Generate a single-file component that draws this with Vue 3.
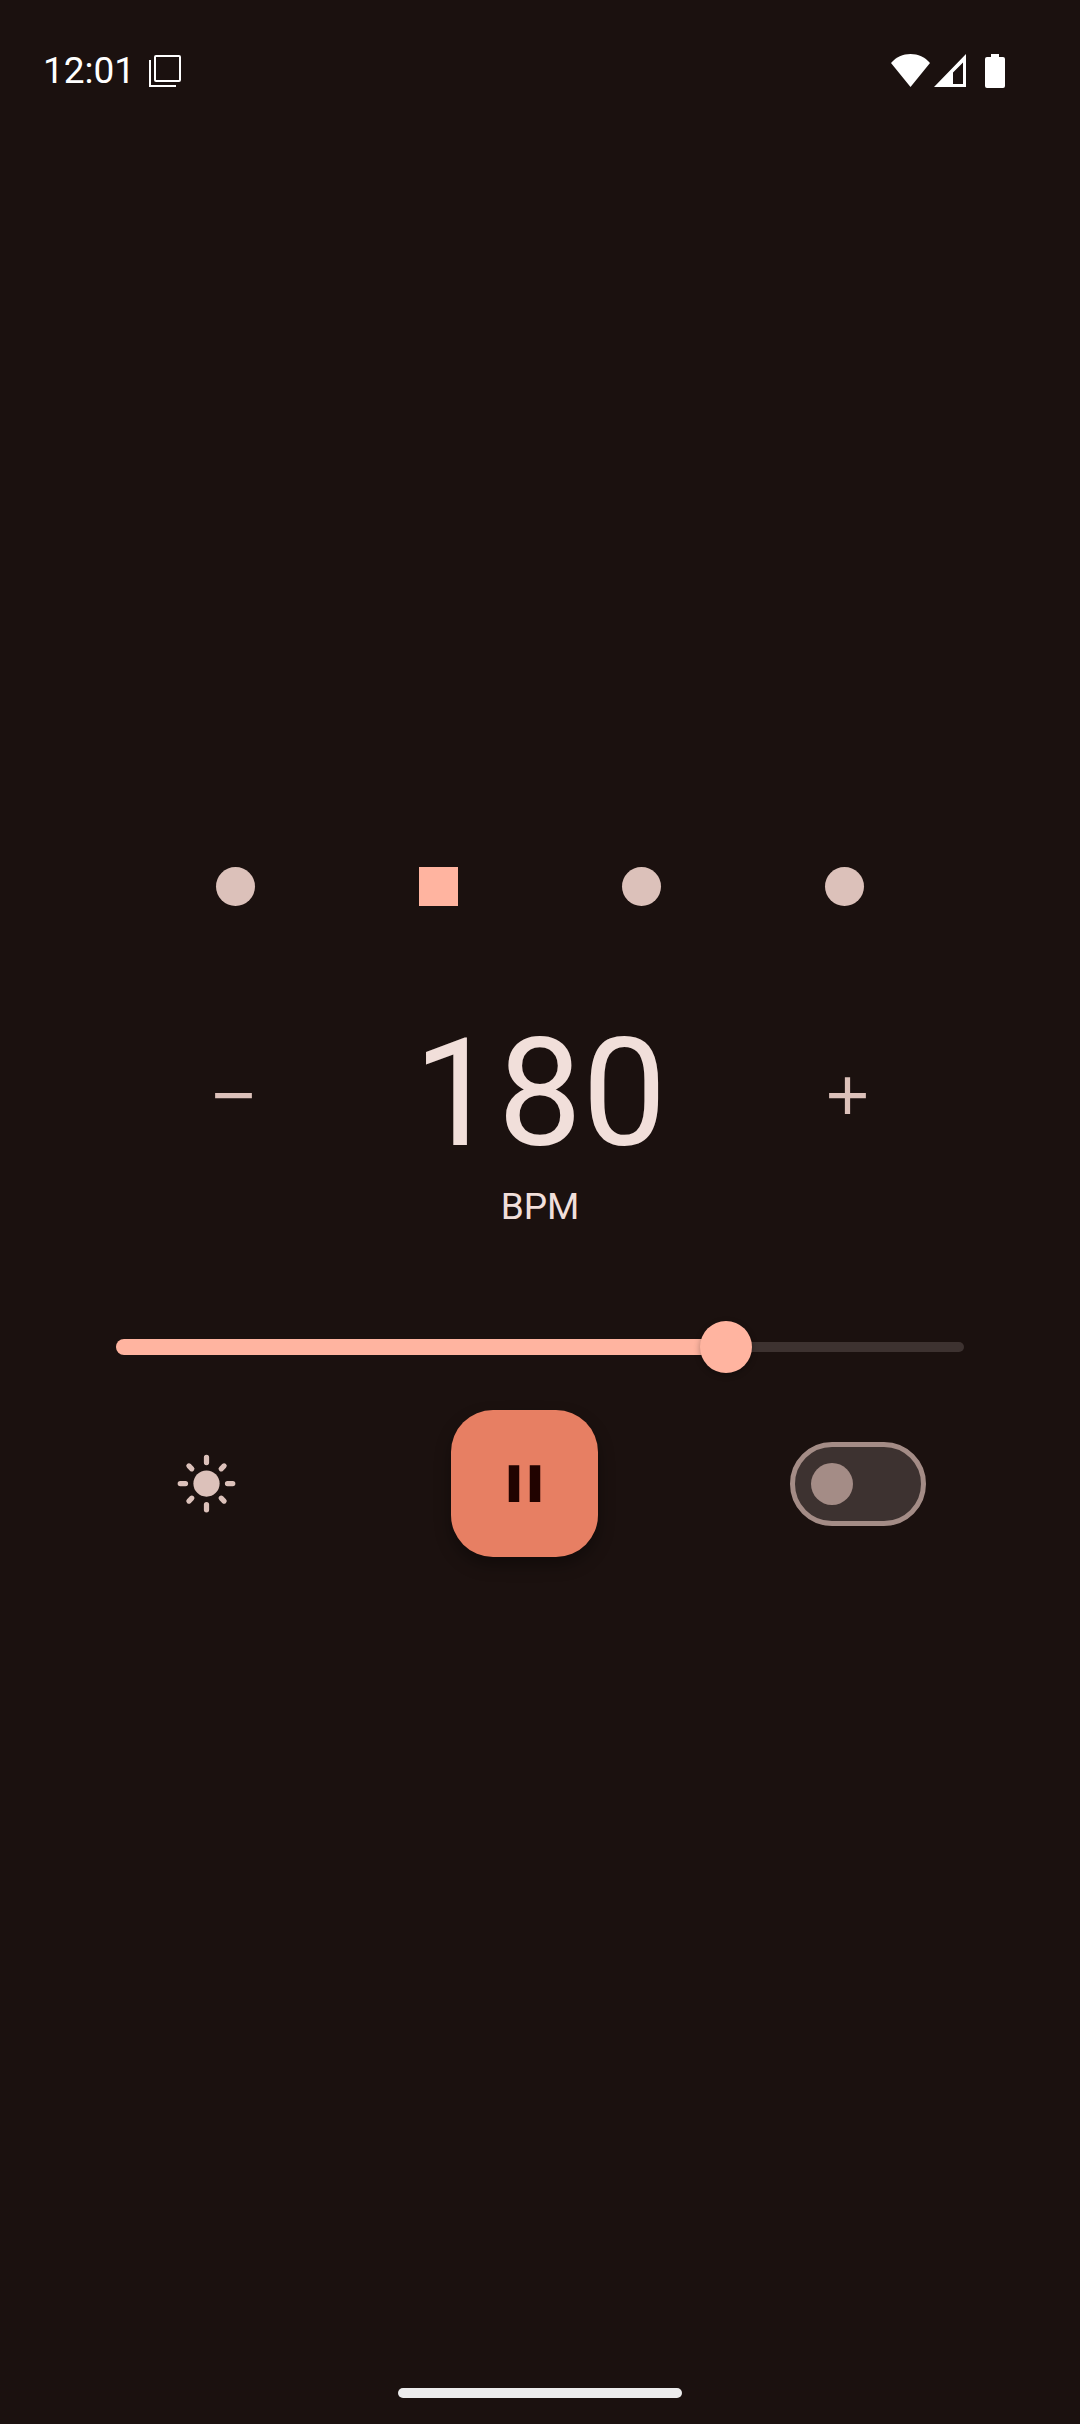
<script setup>
import { computed, ref } from 'vue'

const MIN = 20
const MAX = 238

const bpm = ref(180)
const beats = 4
const currentBeat = ref(1)
const silent = ref(false)

const fraction = computed(() => (bpm.value - MIN) / (MAX - MIN))
const fillStyle = computed(() => ({
  width: `calc(26px + (100% - 52px) * ${fraction.value})`
}))

function step(amount) {
  bpm.value = Math.min(MAX, Math.max(MIN, bpm.value + amount))
}
</script>

<template>
  <div class="screen">
    <header class="status-bar">
      <span class="clock">12:01</span>
      <svg class="notification" viewBox="0 0 32 32" aria-hidden="true">
        <rect x="6" y="1" width="25" height="25" rx="1" />
        <path d="M1 5v26h26" />
      </svg>
      <div class="system-icons">
        <svg width="39" height="33" viewBox="0 0 39 33" aria-hidden="true">
          <path d="M19.500 33 0 9C5 3 12 0 19.500 0S34 3 39 9z" />
        </svg>
        <svg width="32" height="33" viewBox="0 0 32 33" aria-hidden="true">
          <path fill-rule="evenodd" d="M32 0v33H0zM29 8.500 19 18.500V30h10z" />
        </svg>
        <svg class="battery" width="20" height="34" viewBox="0 0 20 34" aria-hidden="true">
          <path d="M6 0h8v3h4q2 0 2 2v27q0 2-2 2H2q-2 0-2-2V5q0-2 2-2h4z" />
        </svg>
      </div>
    </header>

    <main class="metronome">
      <div class="beats">
        <span
          v-for="(n, i) in beats"
          :key="n"
          class="beat"
          :class="{ active: i === currentBeat }"
        ></span>
      </div>

      <section class="tempo">
        <div class="tempo-row">
          <button type="button" class="icon-button" aria-label="Decrease tempo" @click="step(-1)">
            <svg viewBox="0 0 24 24"><path d="M19 13H5v-2h14z" /></svg>
          </button>
          <span class="value">{{ bpm }}</span>
          <button type="button" class="icon-button" aria-label="Increase tempo" @click="step(1)">
            <svg viewBox="0 0 24 24"><path d="M19 13h-6v6h-2v-6H5v-2h6V5h2v6h6z" /></svg>
          </button>
        </div>
        <span class="unit">BPM</span>
      </section>

      <div class="slider">
        <div class="track"></div>
        <div class="fill" :style="fillStyle"></div>
        <input v-model.number="bpm" type="range" :min="MIN" :max="MAX" aria-label="Tempo" />
      </div>

      <div class="controls">
        <button type="button" class="icon-button small" aria-label="Keep screen bright">
          <svg viewBox="0 0 24 24">
            <circle cx="12" cy="12" r="5" />
            <path
              class="rays"
              d="M12 2v2M12 20v2M2 12h2M20 12h2M5.300 5.300l1.100 1.100M17.600 17.600l1.100 1.100M18.700 5.300l-1.100 1.100M6.400 17.600l-1.100 1.100"
            />
          </svg>
        </button>
        <button type="button" class="play" aria-label="Pause">
          <svg viewBox="0 0 24 24"><path d="M6 19h4V5H6zM14 5v14h4V5z" /></svg>
        </button>
        <input v-model="silent" class="switch" type="checkbox" role="switch" aria-label="Silent mode" />
      </div>
    </main>

    <footer class="nav"><div class="handle"></div></footer>
  </div>
</template>

<style>
body {
  background: #1b110f;
}
</style>

<style scoped>
.screen {
  display: grid;
  grid-template-rows: 1fr auto 1fr;
  min-height: 100vh;
  background: #1b110f;
  color: #f1dfda;
  font-family: Roboto, "Noto Sans", sans-serif;
}

.status-bar {
  display: flex;
  align-self: start;
  align-items: center;
  height: 34px;
  padding: 54px 75px 0 43px;
  color: #fff;
}

.clock {
  min-width: 92px;
  font-size: 37px;
  line-height: 34px;
}

.notification {
  width: 32px;
  height: 32px;
  margin-left: 14px;
  fill: none;
  stroke: #fff;
  stroke-width: 2;
}

.system-icons {
  display: flex;
  gap: 4px;
  margin-left: auto;
  fill: #fff;
}

.battery {
  margin-left: 15px;
}

.beats {
  display: flex;
  justify-content: space-around;
  padding: 0 134px;
}

.beat {
  width: 39px;
  height: 39px;
  border-radius: 50%;
  background: #dcc1ba;
}

.beat.active {
  border-radius: 0;
  background: #ffb4a0;
}

.tempo {
  display: flex;
  flex-direction: column;
  margin-top: 103px;
}

.tempo-row {
  display: flex;
  justify-content: space-between;
  height: 172px;
  padding: 0 170px;
}

.value {
  font-size: 150px;
  line-height: 170px;
}

.unit {
  font-size: 37px;
  line-height: 52px;
  text-align: center;
}

button {
  display: flex;
  align-items: center;
  justify-content: center;
  padding: 0;
  border: 0;
  background: none;
  cursor: pointer;
}

button svg {
  width: 63px;
  height: 63px;
}

.icon-button {
  align-self: center;
  width: 126px;
  height: 126px;
  border-radius: 50%;
  fill: #dcc1ba;
}

.icon-button.small {
  width: 105px;
  height: 105px;
}

.rays {
  stroke: #dcc1ba;
  stroke-width: 2;
  stroke-linecap: round;
}

.slider {
  display: grid;
  align-items: center;
  height: 52px;
  margin: 88px 116px 0;
}

.slider > * {
  grid-area: 1 / 1;
}

.track {
  height: 10px;
  border-radius: 5px;
  background: #3d3230;
}

.fill {
  height: 16px;
  border-radius: 8px;
  background: #ffb4a0;
}

.slider input {
  appearance: none;
  width: 100%;
  height: 52px;
  margin: 0;
  background: none;
  cursor: pointer;
}

.slider input::-webkit-slider-thumb {
  appearance: none;
  width: 52px;
  height: 52px;
  border-radius: 50%;
  background: #ffb4a0;
  box-shadow: 0 2px 6px rgba(0, 0, 0, 0.3);
}

.controls {
  display: flex;
  align-items: center;
  justify-content: space-between;
  margin-top: 37px;
  padding: 0 154px;
}

.play {
  width: 147px;
  height: 147px;
  border-radius: 42px;
  background: #e77f63;
  box-shadow: 0 8px 16px rgba(0, 0, 0, 0.35);
  fill: #210300;
}

.switch {
  appearance: none;
  display: flex;
  align-items: center;
  box-sizing: border-box;
  width: 136px;
  height: 84px;
  margin: 0;
  padding: 0 16px;
  border: 5px solid #a48c86;
  border-radius: 42px;
  background: #3d3230;
  cursor: pointer;
}

.switch::before {
  content: "";
  width: 42px;
  height: 42px;
  border-radius: 50%;
  background: #a48c86;
}

.switch:checked {
  justify-content: flex-end;
}

.nav {
  display: flex;
  align-items: flex-end;
  justify-content: center;
  padding-bottom: 26px;
}

.handle {
  width: 284px;
  height: 10px;
  border-radius: 5px;
  background: #ececec;
}
</style>
